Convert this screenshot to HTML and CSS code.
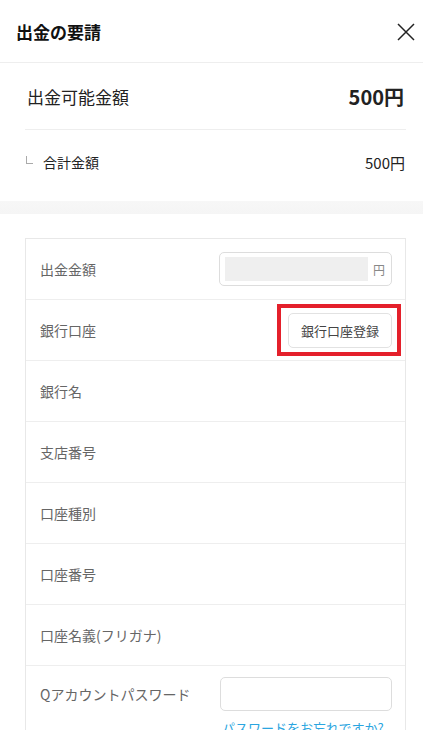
FILE: index.html
```html
<!DOCTYPE html>
<html lang="ja">
<head>
    <meta charset="UTF-8">
    <meta name="viewport" content="width=device-width, initial-scale=1.0">
    <title>出金の要請</title>
    <link rel="stylesheet" href="styles.css">
</head>
<body>
    <div class="header">
        <h1>出金の要請</h1>
        <svg class="close" width="18" height="18" viewBox="0 0 18 18">
            <path d="M1 1 L17 17 M17 1 L1 17" stroke="#222" stroke-width="1.5" fill="none"/>
        </svg>
    </div>

    <div class="summary">
        <div class="summary-row main">
            <span>出金可能金額</span>
            <strong>500円</strong>
        </div>
        <div class="summary-row sub">
            <span><i class="branch"></i>合計金額</span>
            <span>500円</span>
        </div>
    </div>

    <div class="band"></div>

    <div class="form-area">
        <div class="card">
            <div class="row">
                <span class="label">出金金額</span>
                <div class="amount">
                    <div class="amount-fill"></div>
                    <span class="yen">円</span>
                </div>
            </div>
            <div class="row">
                <span class="label">銀行口座</span>
                <div class="highlight">
                    <button class="register">銀行口座登録</button>
                </div>
            </div>
            <div class="row"><span class="label">銀行名</span></div>
            <div class="row"><span class="label">支店番号</span></div>
            <div class="row"><span class="label">口座種別</span></div>
            <div class="row"><span class="label">口座番号</span></div>
            <div class="row"><span class="label">口座名義(フリガナ)</span></div>
            <div class="row pass">
                <span class="label">Qアカウントパスワード</span>
                <div class="pass-box">
                    <input type="password" class="pass-input">
                    <a href="#" class="forgot">パスワードをお忘れですか?</a>
                </div>
            </div>
        </div>
    </div>
</body>
</html>
```

FILE: styles.css
```css
body {
    margin: 0;
    font-family: "Noto Sans CJK JP", "Noto Sans", sans-serif;
    background-color: #fff;
    color: #222;
    overflow: hidden;
}
.header {
    height: 62px;
    display: flex;
    align-items: center;
    justify-content: space-between;
    padding: 0 8px 0 16px;
    border-bottom: 1px solid #eeeeee;
}
.header h1 {
    margin: 0;
    font-size: 17px;
    font-weight: bold;
    color: #111;
}
.close {
    margin-top: 2px;
}
.summary {
    padding: 0 17px 0 25px;
}
.summary-row {
    display: flex;
    justify-content: space-between;
    align-items: center;
}
.summary-row.main {
    height: 66px;
    padding-left: 2px;
    font-size: 17px;
    color: #222;
    border-bottom: 1px solid #eeeeee;
}
.summary-row.main strong {
    font-size: 20px;
    font-weight: bold;
    margin-right: 2px;
}
.summary-row.sub {
    height: 64px;
    font-size: 14px;
    color: #222;
}
.summary-row.sub span:last-child {
    font-size: 15px;
    margin-right: 1px;
}
.branch {
    display: inline-block;
    width: 6px;
    height: 7px;
    border-left: 1px solid #aaa;
    border-bottom: 1px solid #aaa;
    margin: 0 10px 4px 1px;
}
.band {
    height: 13px;
    margin-top: 7px;
    background: linear-gradient(#f7f7f7, #f5f5f5);
}
.form-area {
    padding: 24px 17px 0 25px;
}
.card {
    border: 1px solid #e8e8e8;
    border-bottom: none;
}
.row {
    height: 60px;
    display: flex;
    align-items: center;
    justify-content: space-between;
    padding: 0 13px 0 14px;
    border-bottom: 1px solid #eeeeee;
}
.label {
    font-size: 14px;
    color: #666;
}
.amount {
    width: 160px;
    height: 32px;
    border: 1px solid #dddddd;
    border-radius: 5px;
    display: flex;
    align-items: center;
    padding: 0 6px 0 5px;
    gap: 5px;
}
.amount-fill {
    flex: 1;
    height: 24px;
    background-color: #efefef;
}
.yen {
    font-size: 12px;
    color: #888;
}
.highlight {
    border: 4px solid #e4202b;
    padding: 5px 5px 4px 7px;
    margin-right: -9px;
}
.register {
    display: block;
    width: 104px;
    height: 35px;
    background: #fff;
    border: 1px solid #e2e2e2;
    border-radius: 5px;
    font-family: inherit;
    font-size: 13px;
    color: #444;
    padding: 0;
}
.row.pass {
    height: auto;
    align-items: flex-start;
    padding-top: 11px;
    padding-bottom: 10px;
}
.row.pass .label {
    margin-top: 7px;
}
.pass-box {
    display: flex;
    flex-direction: column;
    gap: 7px;
}
.pass-input {
    width: 170px;
    height: 32px;
    box-sizing: content-box;
    border: 1px solid #dddddd;
    border-radius: 5px;
    padding: 0;
    margin: 0;
}
.forgot {
    font-size: 13px;
    color: #2aa5e0;
    text-decoration: none;
    padding-left: 2px;
}
```
